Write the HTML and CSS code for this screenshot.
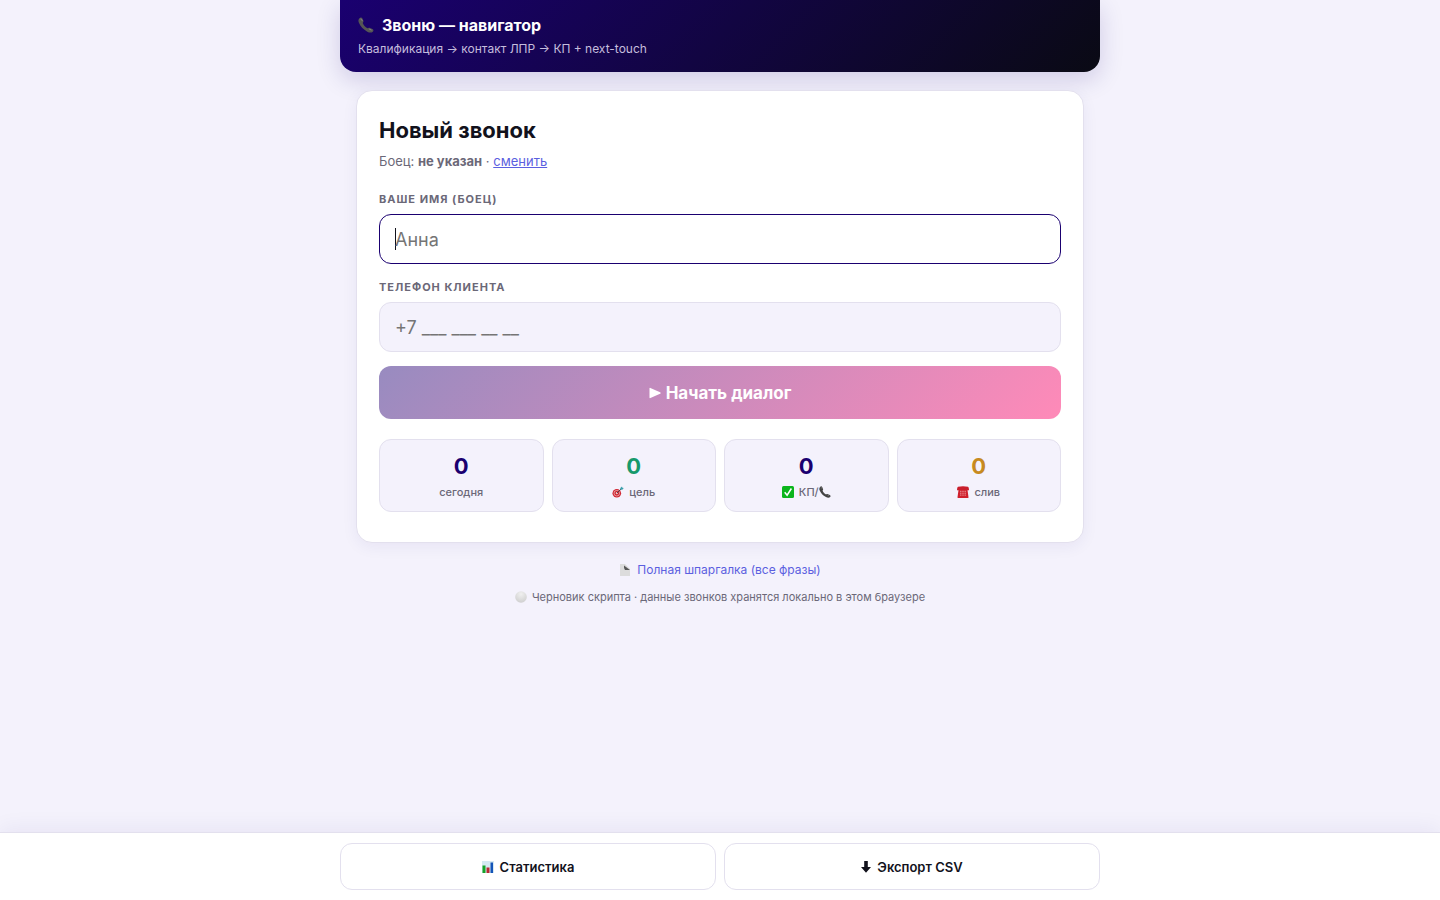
FILE: index.html
```html
<!DOCTYPE html>
<html lang="ru">
<head>
  <meta charset="UTF-8">
  <meta name="viewport" content="width=device-width, initial-scale=1.0">
  <title>Звоню — навигатор</title>
  <link rel="stylesheet" href="styles.css">
</head>
<body>
  <svg width="0" height="0" class="sprite" aria-hidden="true">
    <symbol id="phone" viewBox="0 0 16 16">
      <path d="M1.4 1.2C2.6 0 3.8.2 4.4 1.6l.9 2c.4 1 .1 1.7-.6 2.4.8 2.200 2.400 4.100 4.800 5.300.8-.7 1.500-.8 2.500-.4l2.400 1c1.200.6 1.400 1.800.4 2.800-1.100 1.200-3.300 1.200-5.500 0C5.300 12.600 2.300 9.400.8 5.600.200 4 .3 2.300 1.400 1.200z"/>
      <path d="M2.200 2.300c.4-.6 1.100-.6 1.400.1l.8 1.700M11.200 12.100l2.400 1" fill="none" stroke="#8b8b8b" stroke-width=".8"/>
    </symbol>
  </svg>

  <header class="header">
    <h1><svg class="icon icon-phone"><use href="#phone"/></svg>Звоню — навигатор</h1>
    <p>Квалификация → контакт ЛПР → КП + next-touch</p>
  </header>

  <main class="main">
    <form class="card">
      <h2>Новый звонок</h2>
      <p class="agent">Боец: <b>не указан</b> · <a href="#agent">сменить</a></p>

      <label for="agent">Ваше имя (боец)</label>
      <input type="text" id="agent" placeholder="Анна" autofocus>

      <label for="phone-input">Телефон клиента</label>
      <input type="tel" id="phone-input" placeholder="+7 ___ ___ __ __">

      <button type="button" class="start">
        <svg class="icon icon-play" viewBox="0 0 12 12"><path d="M.5 1.600v8.800q0 1 .9.700l9.700-4.300q1.200-.8 0-1.600L1.400.9Q.5.6.5 1.600z" fill="#fff"/></svg>
        Начать диалог
      </button>

      <div class="stats">
        <div class="stat">
          <strong>0</strong>
          <span>сегодня</span>
        </div>
        <div class="stat stat-goal">
          <strong>0</strong>
          <span>
            <svg class="icon" viewBox="0 0 12 12"><circle cx="4.800" cy="7.200" r="4.300" fill="#d02530"/><circle cx="4.800" cy="7.200" r="2.800" fill="none" stroke="#eec4c6" stroke-width=".7"/><circle cx="4.800" cy="7.200" r="1.100" fill="#eec4c6"/><path d="M5 7l4-4" stroke="#51424a" stroke-width="1"/><path d="M8.300 3.700V2L10 .5l.4 1.200 1.400.4-1.500 1.600z" fill="#3aa0ac"/></svg>
            цель
          </span>
        </div>
        <div class="stat">
          <strong>0</strong>
          <span>
            <svg class="icon" viewBox="0 0 12 12"><rect width="12" height="12" rx="1.500" fill="#0bb51c"/><path d="M2.700 6.200l2.400 3 4.300-6.700" fill="none" stroke="#fff" stroke-width="1.500"/></svg>
            КП/<svg class="icon icon-call"><use href="#phone"/></svg>
          </span>
        </div>
        <div class="stat stat-lost">
          <strong>0</strong>
          <span>
            <svg class="icon" viewBox="0 0 12 12"><path d="M1 .8Q6-.4 11 .8q1 .5 1 3.400H0Q0 1.300 1 .8z" fill="#c91e2b"/><path d="M1.500 4h9l.9 6.500V12H.6v-1.500z" fill="#d0202d"/><path d="M3.200 5.300h5.600M3.200 7.200h5.600M3.200 9.100h5.600" stroke="#f3b9bc" stroke-width=".9" stroke-dasharray="1.200 1"/></svg>
            слив
          </span>
        </div>
      </div>
    </form>

    <a class="sheet" href="#sheet">
      <svg class="icon" viewBox="0 0 12 12"><path d="M1 0h5l5 5v7H1z" fill="#dcdcdc"/><path d="M5 1.500L11 6H6Q4.600 4 5 1.500z" fill="#585858"/></svg>
      Полная шпаргалка (все фразы)
    </a>
    <p class="note">
      <svg class="icon" viewBox="0 0 12 12"><defs><radialGradient id="ball" cx=".5" cy=".25" r=".75"><stop offset="0" stop-color="#f0f0f0"/><stop offset="1" stop-color="#cfcfcf"/></radialGradient></defs><circle cx="6" cy="6" r="5.800" fill="url(#ball)"/></svg>
      Черновик скрипта · данные звонков хранятся локально в этом браузере
    </p>
  </main>

  <nav class="bottom">
    <div class="bottom-inner">
      <button type="button">
        <svg class="icon" viewBox="0 0 12 12"><rect width="12" height="12" fill="#d5e9f2"/><path d="M.5 4.500h3V12h-3z" fill="#16a329"/><path d="M4.500 6.500h3V12h-3z" fill="#b92932"/><path d="M8.500 1.500H11V12H8.500z" fill="#1454b8"/></svg>
        Статистика
      </button>
      <button type="button">
        <svg class="icon icon-down" viewBox="0 0 10 12"><path d="M3.200 0h3.600v6H10L5 11.800 0 6h3.200z" fill="#12121c"/></svg>
        Экспорт CSV
      </button>
    </div>
  </nav>
</body>
</html>
```

FILE: styles.css
```css
* {
  box-sizing: border-box;
}

body {
  margin: 0;
  min-height: 100vh;
  display: flex;
  flex-direction: column;
  background: #f4f2fc;
  color: #12121c;
  font-family: Inter, "Noto Sans", sans-serif;
  font-size: 16px;
}

h1, h2, p {
  margin: 0;
}

button, input {
  font-family: inherit;
}

.sprite {
  position: absolute;
}

.icon {
  width: 12px;
  height: 12px;
  flex: none;
}

.header {
  width: 100%;
  max-width: 760px;
  margin: 0 auto;
  padding: 13px 18px;
  border-radius: 0 0 16px 16px;
  background: linear-gradient(135deg, #1a0070, #0a0a14);
  color: #fff;
  box-shadow: 0 8px 24px rgba(26, 0, 112, 0.16);
}

.header h1 {
  display: flex;
  align-items: center;
  gap: 8px;
  font-size: 16px;
  line-height: 24px;
  font-weight: 700;
}

.icon-phone {
  width: 16px;
  height: 16px;
  fill: #555;
}

.header p {
  margin-top: 2px;
  font-size: 12px;
  line-height: 20px;
  color: #c5bddd;
}

.main {
  flex: 1;
  width: 100%;
  max-width: 760px;
  margin: 0 auto;
  padding: 18px 16px;
  display: flex;
  flex-direction: column;
  align-items: center;
}

.card {
  width: 100%;
  padding: 22px 22px 30px;
  background: #fff;
  border: 1px solid #e3e0ee;
  border-radius: 16px;
  box-shadow: 0 4px 16px rgba(26, 0, 112, 0.06);
}

.card h2 {
  font-size: 22px;
  line-height: 34px;
  font-weight: 700;
}

.agent {
  margin: 4px 0 19px;
  font-size: 13px;
  line-height: 20px;
  color: #6b6878;
}

.agent a {
  color: #5b5fe0;
}

.card label {
  display: block;
  margin-bottom: 6px;
  font-size: 11px;
  line-height: 18px;
  font-weight: 700;
  letter-spacing: 1px;
  text-transform: uppercase;
  color: #6b6878;
}

.card input {
  display: block;
  width: 100%;
  height: 50px;
  margin-bottom: 14px;
  padding: 0 15px;
  border: 1px solid #e3e0ee;
  border-radius: 12px;
  background: #f4f2fc;
  font-size: 18px;
  color: #12121c;
}

.card input::placeholder {
  color: #757575;
}

.card input:focus {
  outline: none;
  border-color: #1a0070;
  background: #fff;
}

/* steady caret while the focused field is empty */
.card input:focus:placeholder-shown {
  caret-color: transparent;
  background: linear-gradient(#12121c, #12121c) 15px center / 1px 22px no-repeat #fff;
}

.start {
  display: flex;
  align-items: center;
  justify-content: center;
  gap: 5px;
  width: 100%;
  height: 53px;
  margin-bottom: 20px;
  border: none;
  border-radius: 12px;
  background: linear-gradient(135deg, #988bc0, #ff8ab8);
  color: #fff;
  font-size: 17px;
  font-weight: 700;
}

.stats {
  display: grid;
  grid-template-columns: repeat(4, 1fr);
  gap: 8px;
}

.stat {
  padding: 10px 8px;
  text-align: center;
  background: #f4f2fc;
  border: 1px solid #e3e0ee;
  border-radius: 12px;
}

.stat strong {
  display: block;
  font-size: 22px;
  line-height: 33px;
  color: #1a0070;
}

.stat-goal strong {
  color: #16996b;
}

.stat-lost strong {
  color: #c78a20;
}

.stat span {
  display: flex;
  align-items: center;
  justify-content: center;
  gap: 5px;
  font-size: 11px;
  line-height: 18px;
  font-weight: 500;
  color: #6b6878;
}

.icon-call {
  margin-left: -5px;
  fill: #444;
}

.sheet {
  display: flex;
  align-items: center;
  gap: 6px;
  margin-top: 17px;
  font-size: 12px;
  line-height: 20px;
  color: #5b5fe0;
  text-decoration: none;
}

.note {
  display: flex;
  align-items: center;
  gap: 5px;
  margin-top: 8px;
  font-size: 11px;
  line-height: 18px;
  color: #6b6878;
}

.bottom {
  position: sticky;
  bottom: 0;
  padding: 10px 0;
  background: #fff;
  border-top: 1px solid #e3e0ee;
  box-shadow: 0 -4px 20px rgba(26, 0, 112, 0.06);
}

.bottom-inner {
  max-width: 760px;
  margin: 0 auto;
  display: grid;
  grid-template-columns: 1fr 1fr;
  gap: 8px;
}

.bottom button {
  display: flex;
  align-items: center;
  justify-content: center;
  gap: 6px;
  height: 47px;
  background: #fff;
  border: 1px solid #e3e0ee;
  border-radius: 12px;
  color: #12121c;
  font-size: 13px;
  font-weight: 600;
}

.icon-down {
  width: 10px;
}
```
